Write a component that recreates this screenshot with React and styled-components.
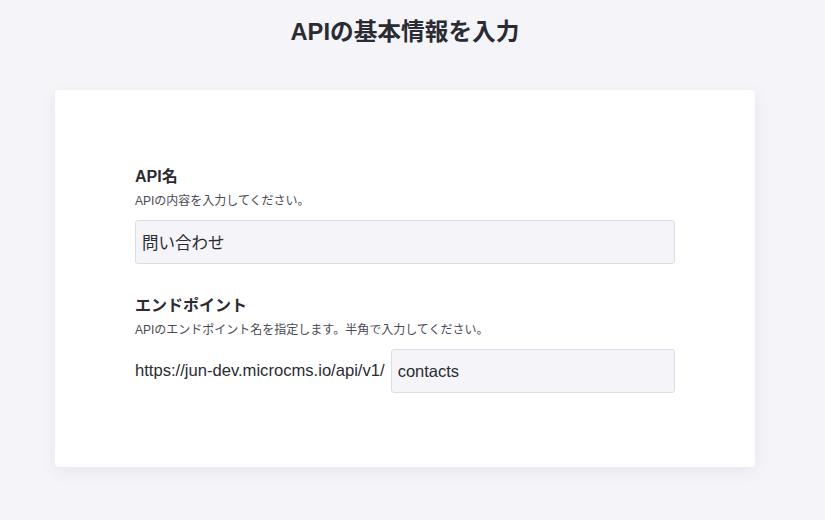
import React from "react";
import styled, { createGlobalStyle } from "styled-components";

const Global = createGlobalStyle`
  html, body { margin: 0; padding: 0; }
  body {
    background: #f5f5f9;
    font-family: "Liberation Sans", "Noto Sans CJK JP", sans-serif;
    color: #21213b;
  }
`;

const Page = styled.div`
  width: 810px;
  height: 520px;
  display: flex;
  flex-direction: column;
  align-items: center;
  box-sizing: border-box;
  padding-top: 16px;
`;

const Heading = styled.h1`
  margin: 0;
  font-size: 23.7px;
  line-height: 32px;
  font-weight: 700;
  color: #2b2b33;
`;

const Card = styled.section`
  margin-top: 42px;
  width: 700px;
  height: 377px;
  box-sizing: border-box;
  background: #fff;
  border-radius: 4px;
  box-shadow: 0 4px 16px rgba(40, 40, 90, 0.08);
  padding: 77px 80px 0;
  display: flex;
  flex-direction: column;
  gap: 32px;
`;

const Field = styled.div`
  display: flex;
  flex-direction: column;
`;

const Label = styled.div`
  font-size: 16px;
  font-weight: 700;
  line-height: 20px;
  color: #2b2b33;
`;

const Desc = styled.div`
  margin-top: 7px;
  font-size: 12px;
  line-height: 14px;
  color: #4a4a55;
`;

const Row = styled.div`
  margin-top: 12px;
  display: flex;
  align-items: center;
  gap: 6px;
`;

const Prefix = styled.span`
  font-size: 16.6px;
  color: #2b2b33;
  white-space: nowrap;
`;

const Input = styled.input`
  box-sizing: border-box;
  flex: 1;
  min-width: 0;
  height: 44px;
  padding: 0 6px;
  border: 1px solid #dcdce2;
  border-radius: 3px;
  background: #f5f5f9;
  font-family: inherit;
  font-size: 16.5px;
  color: #2b2b33;
  outline: none;
`;

export default function App() {
  return (
    <>
      <Global />
      <Page>
        <Heading>APIの基本情報を入力</Heading>
        <Card>
          <Field>
            <Label>API名</Label>
            <Desc>APIの内容を入力してください。</Desc>
            <Row>
              <Input defaultValue="問い合わせ" />
            </Row>
          </Field>
          <Field>
            <Label>エンドポイント</Label>
            <Desc>APIのエンドポイント名を指定します。半角で入力してください。</Desc>
            <Row>
              <Prefix>https://jun-dev.microcms.io/api/v1/</Prefix>
              <Input defaultValue="contacts" />
            </Row>
          </Field>
        </Card>
      </Page>
    </>
  );
}
